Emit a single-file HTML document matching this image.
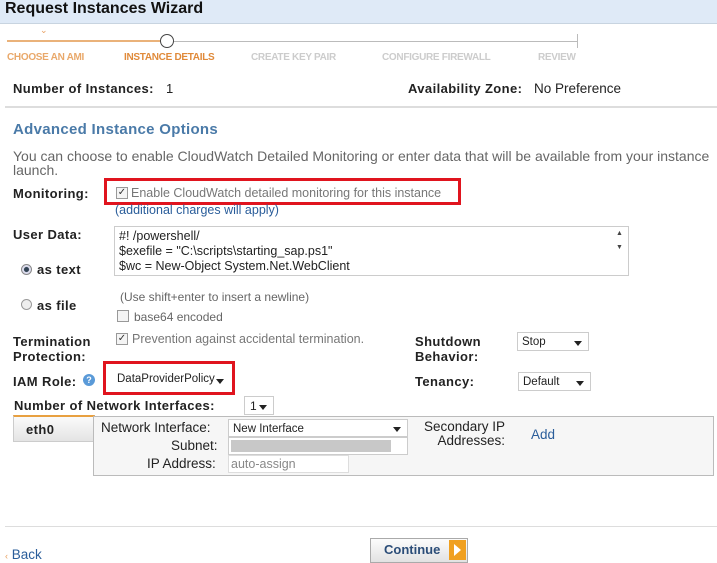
<!DOCTYPE html>
<html><head><style>
body{margin:0;width:717px;height:563px;background:#fff;font-family:"Liberation Sans",Arial,sans-serif;position:relative;overflow:hidden;color:#222}
.a{position:absolute;white-space:nowrap}
.b{font-weight:bold;font-size:13px;color:#222;letter-spacing:0.4px}
.s{font-size:13px}
.step{font-size:10px;font-weight:bold;top:52px;letter-spacing:-0.3px;color:#ccc}
.sel{position:absolute;background:#fff;border:1px solid #ccc;font-size:11.5px;box-sizing:border-box;padding:3px 4px}
.sel:after{content:"";position:absolute;right:6px;top:50%;margin-top:-1px;border:4px solid transparent;border-top:5px solid #222;border-bottom:0}
.cb{position:absolute;width:10px;height:10px;border:1px solid #999;background:#f4f4f4;font-size:10px;line-height:10px;text-align:center;color:#333}
</style></head><body>
<div class="a" style="left:0;top:0;width:717px;height:23px;background:#dfeaf7"></div>
<div class="a" style="left:5px;top:0px;font-size:16px;font-weight:bold;color:#111">Request Instances Wizard</div>
<div class="a" style="left:0;top:23px;width:717px;height:1px;background:#c8d4e0"></div>
<div class="a" style="left:40px;top:25px;font-size:9px;color:#e8a060">&#8964;</div>
<div class="a" style="left:7px;top:40px;width:155px;height:2px;background:#eab27a"></div>
<div class="a" style="left:173px;top:41px;width:404px;height:1px;background:#bbb"></div>
<div class="a" style="left:577px;top:34px;width:1px;height:14px;background:#bbb"></div>
<div class="a" style="left:160px;top:34px;width:12px;height:12px;border:1.5px solid #444;border-radius:50%;background:#fff"></div>
<div class="a step" style="left:7px;color:#e9a86a">CHOOSE AN AMI</div>
<div class="a step" style="left:124px;color:#e08a3a">INSTANCE DETAILS</div>
<div class="a step" style="left:251px">CREATE KEY PAIR</div>
<div class="a step" style="left:382px">CONFIGURE FIREWALL</div>
<div class="a step" style="left:538px">REVIEW</div>
<div class="a b" style="left:13px;top:81px">Number of Instances:</div>
<div class="a s" style="left:166px;top:81px">1</div>
<div class="a b" style="left:408px;top:81px">Availability Zone:</div>
<div class="a s" style="left:534px;top:81px;font-size:13.5px">No Preference</div>
<div class="a" style="left:5px;top:106px;width:712px;height:2px;background:#ddd"></div>
<div class="a" style="left:13px;top:121px;font-size:15px;font-weight:bold;color:#4a7aa8;letter-spacing:0.3px">Advanced Instance Options</div>
<div class="a" style="left:13px;top:148px;font-size:14px;color:#666">You can choose to enable CloudWatch Detailed Monitoring or enter data that will be available from your instance</div>
<div class="a" style="left:13px;top:162px;font-size:14px;color:#666">launch.</div>
<div class="a b" style="left:13px;top:186px">Monitoring:</div>
<div class="a" style="left:104px;top:178px;width:351px;height:21px;border:3px solid #e0141e"></div>
<div class="cb" style="left:116px;top:187px">✓</div>
<div class="a" style="left:131px;top:186px;font-size:12.5px;color:#777">Enable CloudWatch detailed monitoring for this instance</div>
<div class="a" style="left:115px;top:203px;font-size:12.5px;color:#2a5d9a">(additional charges will apply)</div>
<div class="a b" style="left:13px;top:227px">User Data:</div>
<div class="a" style="left:114px;top:226px;width:515px;height:50px;border:1px solid #ccc;font-size:12.5px;line-height:15px;padding:2px 4px;box-sizing:border-box">#! /powershell/<br>$exefile = "C:\scripts\starting_sap.ps1"<br>$wc = New-Object System.Net.WebClient</div>
<div class="a" style="left:616px;top:227px;font-size:7px;color:#444;line-height:14px">▲<br>▼</div>
<div class="a" style="left:21px;top:264px;width:9px;height:9px;border-radius:50%;border:1px solid #888;background:radial-gradient(#345 35%,#dde 45%)"></div>
<div class="a b" style="left:37px;top:262px">as text</div>
<div class="a" style="left:21px;top:299px;width:9px;height:9px;border-radius:50%;border:1px solid #999;background:#eee"></div>
<div class="a b" style="left:37px;top:298px">as file</div>
<div class="a" style="left:120px;top:290px;font-size:12px;color:#666">(Use shift+enter to insert a newline)</div>
<div class="cb" style="left:117px;top:310px"></div>
<div class="a" style="left:134px;top:310px;font-size:12px;color:#666">base64 encoded</div>
<div class="a b" style="left:13px;top:334px;line-height:15px">Termination<br>Protection:</div>
<div class="cb" style="left:116px;top:333px">✓</div>
<div class="a" style="left:132px;top:332px;font-size:12.5px;color:#777">Prevention against accidental termination.</div>
<div class="a b" style="left:415px;top:334px;line-height:15px">Shutdown<br>Behavior:</div>
<div class="sel" style="left:517px;top:332px;width:72px;height:19px">Stop</div>
<div class="a b" style="left:13px;top:374px">IAM Role:</div>
<div class="a" style="left:83px;top:374px;width:12px;height:12px;border-radius:50%;background:#5a9ad8;color:#fff;font-size:9px;text-align:center;line-height:12px;font-weight:bold">?</div>
<div class="a" style="left:103px;top:361px;width:126px;height:28px;border:3px solid #e0141e"></div>
<div class="sel" style="left:113px;top:370px;width:117px;height:20px;border:none;font-size:11.5px">DataProviderPolicy</div>
<div class="a b" style="left:415px;top:374px">Tenancy:</div>
<div class="sel" style="left:518px;top:372px;width:73px;height:19px">Default</div>
<div class="a b" style="left:14px;top:398px">Number of Network Interfaces:</div>
<div class="sel" style="left:244px;top:396px;width:30px;height:19px;font-size:12px;padding:2px 5px">1</div>
<div class="a" style="left:13px;top:415px;width:82px;height:27px;background:linear-gradient(#fafafa,#e4e4e4);border:1px solid #ccc;border-top:2px solid #e8a040;box-sizing:border-box"></div>
<div class="a b" style="left:26px;top:422px">eth0</div>
<div class="a" style="left:93px;top:416px;width:621px;height:60px;border:1px solid #bbb;background:#f6f6f6;box-sizing:border-box"></div>
<div class="a s" style="left:101px;top:420px;font-size:13.5px">Network Interface:</div>
<div class="a s" style="left:171px;top:438px;font-size:13.5px">Subnet:</div>
<div class="a s" style="left:147px;top:456px;font-size:13.5px">IP Address:</div>
<div class="sel" style="left:228px;top:419px;width:180px;height:18px">New Interface</div>
<div class="a" style="left:228px;top:437px;width:180px;height:18px;border:1px solid #ccc;background:#fff;box-sizing:border-box"><div style="margin:2px;width:160px;height:12px;background:#c8c8c8"></div></div>
<div class="a" style="left:228px;top:455px;width:121px;height:18px;border:1px solid #ddd;background:#fff;box-sizing:border-box;font-size:12.5px;color:#888;padding:1px 2px">auto-assign</div>
<div class="a s" style="left:424px;top:420px;text-align:right;line-height:14px;font-size:13.5px">Secondary IP<br>&nbsp;&nbsp;&nbsp;Addresses:</div>
<div class="a" style="left:531px;top:427px;font-size:13.5px;color:#2a5d9a">Add</div>
<div class="a" style="left:5px;top:526px;width:712px;height:1px;background:#ddd"></div>
<div class="a" style="left:5px;top:547px;font-size:13.5px;color:#2a5d9a"><span style="color:#e8a060;font-size:9px">‹</span> Back</div>
<div class="a" style="left:370px;top:538px;width:98px;height:25px;border:1px solid #aaa;background:linear-gradient(#fcfcfc,#e2e2e2);box-sizing:border-box"></div>
<div class="a" style="left:384px;top:542px;font-size:13px;font-weight:bold;color:#2b4d78">Continue</div>
<div class="a" style="left:449px;top:540px;width:17px;height:20px;background:#f0a020"></div>
<div class="a" style="left:454px;top:544px;border:6px solid transparent;border-left:7px solid #fff;border-right:0"></div>
</body></html>
